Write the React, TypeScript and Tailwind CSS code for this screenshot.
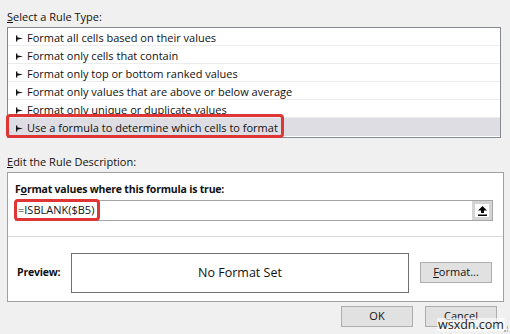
import React from "react";

const Arrow = () => (
  <svg width="7" height="7" viewBox="0 0 7 7" className="shrink-0 mr-[4px] mt-[1px]">
    <rect x="0" y="0.5" width="1.3" height="6" fill="#111" />
    <polygon points="1,2.2 7,3.5 1,4.8" fill="#111" />
  </svg>
);

const rows = [
  "Format all cells based on their values",
  "Format only cells that contain",
  "Format only top or bottom ranked values",
  "Format only values that are above or below average",
  "Format only unique or duplicate values",
  "Use a formula to determine which cells to format",
];

export default function App() {
  return (
    <div
      className="relative w-[510px] h-[334px] overflow-hidden bg-[#f0f0f0] text-[11px] text-[#111]"
      style={{ fontFamily: '"Open Sans", "Noto Sans", sans-serif' }}
    >
      <div className="pl-[7px] pt-[8px]">
        <div className="h-[18px] leading-[18px]">
          <span className="underline">S</span>elect a Rule Type:
        </div>
        <div className="mt-[1px] w-[494px] h-[111px] border border-[#828790] bg-white">
          {rows.map((r, i) => (
            <div
              key={i}
              className={`flex items-center h-[18px] pl-[8px] pt-[2px] border-b ${
                i === 5 ? "bg-[#dddde3] border-transparent" : "border-[#ececec]"
              }`}
            >
              <Arrow />
              <span className="leading-[16px]">{r}</span>
            </div>
          ))}
        </div>
        <div className="mt-[15px] h-[18px] leading-[18px]">
          <span className="underline">E</span>dit the Rule Description:
        </div>
        <div className="mt-[1px] w-[497px] h-[130px] border border-[#a0a0a0] bg-white flex flex-col">
          <div className="h-[64px] border-b border-[#dcdcdc] pl-[7px] pt-[7px]">
            <div className="font-bold h-[18px] leading-[18px] text-[10.5px] tracking-[-0.2px]">
              F<span className="underline">o</span>rmat values where this formula is true:
            </div>
            <div className="mt-[2px] w-[478px] h-[21px] border border-[#a5a5a5] flex items-center">
              <span className="pl-[2px] flex-1">=ISBLANK($B5)</span>
              <div className="w-[20px] h-[19px] bg-[#d4d4d4] flex items-center justify-center">
                <div className="w-[14px] h-[13px] bg-white flex items-center justify-center">
                  <svg width="9" height="10" viewBox="0 0 9 10">
                    <polygon points="4.5,0 9,4.5 6,4.5 6,7 3,7 3,4.5 0,4.5" fill="#000" />
                    <rect x="0" y="8.5" width="9" height="1.5" fill="#000" />
                  </svg>
                </div>
              </div>
            </div>
          </div>
          <div className="flex items-start flex-1 pl-[9px] pt-[16px]">
            <div className="font-bold w-[54px] mt-[12px] text-[10.5px] tracking-[-0.2px]">Preview:</div>
            <div className="w-[338px] h-[40px] border border-[#707070] flex items-center justify-center text-[12.5px]">
              No Format Set
            </div>
            <div className="ml-[11px] mt-[9px] w-[72px] h-[21px] bg-[#e1e1e1] border border-[#adadad] flex items-center justify-center">
              <span>
                <span className="underline">F</span>ormat...
              </span>
            </div>
          </div>
        </div>
        <div className="mt-[4px] flex justify-end gap-[12px] pr-[13px]">
          <div className="w-[72px] h-[21px] bg-[#e1e1e1] border border-[#adadad] flex items-center justify-center">
            OK
          </div>
          <div className="w-[72px] h-[21px] bg-[#e1e1e1] border border-[#adadad] flex items-start justify-center pt-[1px]">
            Cancel
          </div>
        </div>
      </div>

      {/* red highlight boxes */}
      <div className="absolute left-[6px] top-[114px] w-[278px] h-[24px] border-[3px] border-[#e03535] rounded-[4px]" />
      <div className="absolute left-[14px] top-[199px] w-[86px] h-[22px] border-[3px] border-[#e03535] rounded-[4px]" />

      {/* watermark */}
      <div className="absolute left-[437px] top-[318px] text-[12.5px] leading-[13px] text-[#222] bg-white/60 px-[1px]">
        wsxdn.com
      </div>
      <div className="absolute right-[2px] bottom-[2px] w-[6px] h-[6px] grid grid-cols-3 gap-[1px]">
        <span />
        <span />
        <span className="bg-[#b5b5b5]" />
        <span />
        <span className="bg-[#b5b5b5]" />
        <span className="bg-[#b5b5b5]" />
      </div>
    </div>
  );
}
